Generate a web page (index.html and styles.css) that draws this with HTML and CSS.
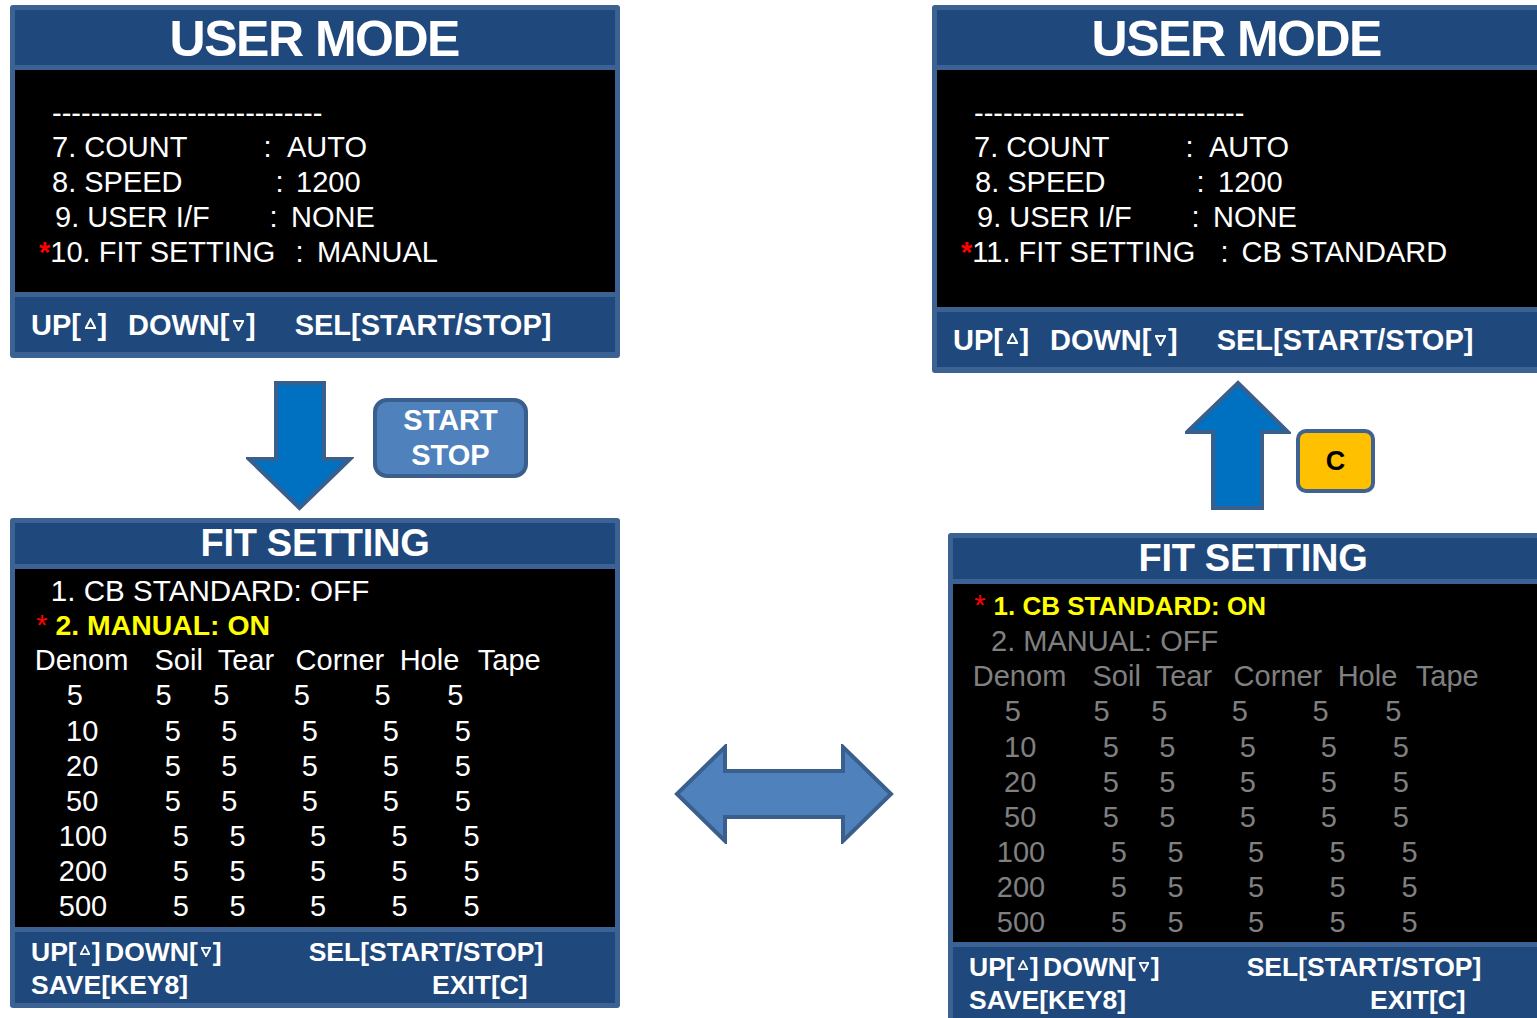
FILE: index.html
```html
<!DOCTYPE html>
<html>
<head>
<meta charset="utf-8">
<title>User Mode / Fit Setting</title>
<link rel="stylesheet" href="styles.css">
</head>
<body>
<div class="stage">

  <div class="col col-left">
    <section class="panel panel-um">
      <div class="hd hd-um">USER MODE</div>
      <div class="scr scr-um">
        <div class="dash">----------------------------</div>
        <div class="mrow r7"><span>7. COUNT</span><span>:</span><span>AUTO</span></div>
        <div class="mrow r8"><span>8. SPEED</span><span>:</span><span>1200</span></div>
        <div class="mrow r9"><span>9. USER I/F</span><span>:</span><span>NONE</span></div>
        <div class="mrow r10"><span><span class="ast">*</span>10. FIT SETTING</span><span>:</span><span>MANUAL</span></div>
      </div>
      <div class="ft ft-um">
        <span class="fi f-up">UP[<svg class="tri tri-up" viewBox="0 0 10 10"><polygon points="5,0.9 9.3,9.1 0.7,9.1"/></svg>]</span>
        <span class="fi f-down">DOWN[<svg class="tri tri-down" viewBox="0 0 10 10"><polygon points="0.7,0.9 9.3,0.9 5,9.1"/></svg>]</span>
        <span class="fi">SEL[START/STOP]</span>
      </div>
    </section>

    <div class="step step-left">
      <svg class="arrow-down" viewBox="0 0 108 132" width="108" height="132">
        <polygon points="30,3 78,3 78,79 104,79 53.5,128 3,79 30,79"/>
      </svg>
      <div class="key key-start">START<br>STOP</div>
    </div>

    <section class="panel panel-fs">
      <div class="hd hd-fs">FIT SETTING</div>
      <div class="scr scr-fs">
        <div class="fl fl1">1. CB STANDARD: OFF</div>
        <div class="fl fl2"><span class="ast2">*</span><span class="sel sel-l">2. MANUAL: ON</span></div>
        <div class="trow hdr"><span>Denom</span><span>Soil</span><span>Tear</span><span>Corner</span><span>Hole</span><span>Tape</span></div>
        <div class="trow g1"><span>5</span><span>5</span><span>5</span><span>5</span><span>5</span><span>5</span></div>
        <div class="trow g2"><span>10</span><span>5</span><span>5</span><span>5</span><span>5</span><span>5</span></div>
        <div class="trow g2"><span>20</span><span>5</span><span>5</span><span>5</span><span>5</span><span>5</span></div>
        <div class="trow g2"><span>50</span><span>5</span><span>5</span><span>5</span><span>5</span><span>5</span></div>
        <div class="trow g3"><span>100</span><span>5</span><span>5</span><span>5</span><span>5</span><span>5</span></div>
        <div class="trow g3"><span>200</span><span>5</span><span>5</span><span>5</span><span>5</span><span>5</span></div>
        <div class="trow g3"><span>500</span><span>5</span><span>5</span><span>5</span><span>5</span><span>5</span></div>
      </div>
      <div class="ft ft-fs">
        <div class="fline fline1">
          <span class="fi fb-up">UP[<svg class="tri tri-up" viewBox="0 0 10 10"><polygon points="5,0.9 9.3,9.1 0.7,9.1"/></svg>]</span>
          <span class="fi fb-down">DOWN[<svg class="tri tri-down" viewBox="0 0 10 10"><polygon points="0.7,0.9 9.3,0.9 5,9.1"/></svg>]</span>
          <span class="fi">SEL[START/STOP]</span>
        </div>
        <div class="fline fline2">
          <span class="fi fb-save">SAVE[KEY8]</span>
          <span class="fi">EXIT[C]</span>
        </div>
      </div>
    </section>
  </div>

  <div class="col col-mid">
    <svg class="arrow-both" viewBox="0 0 220 100" width="220" height="100">
      <polygon points="3,50 51,3 51,27 169,27 169,3 217,50 169,97 169,73 51,73 51,97"/>
    </svg>
  </div>

  <div class="col col-right">
    <section class="panel panel-um panel-um-r">
      <div class="hd hd-um">USER MODE</div>
      <div class="scr scr-um scr-um-r">
        <div class="dash">----------------------------</div>
        <div class="mrow r7"><span>7. COUNT</span><span>:</span><span>AUTO</span></div>
        <div class="mrow r8 r8b"><span>8. SPEED</span><span>:</span><span>1200</span></div>
        <div class="mrow r9"><span>9. USER I/F</span><span>:</span><span>NONE</span></div>
        <div class="mrow r11"><span><span class="ast">*</span>11. FIT SETTING</span><span>:</span><span>CB STANDARD</span></div>
      </div>
      <div class="ft ft-um">
        <span class="fi f-up">UP[<svg class="tri tri-up" viewBox="0 0 10 10"><polygon points="5,0.9 9.3,9.1 0.7,9.1"/></svg>]</span>
        <span class="fi f-down">DOWN[<svg class="tri tri-down" viewBox="0 0 10 10"><polygon points="0.7,0.9 9.3,0.9 5,9.1"/></svg>]</span>
        <span class="fi">SEL[START/STOP]</span>
      </div>
    </section>

    <div class="step step-right">
      <svg class="arrow-up" viewBox="0 0 106 132" width="106" height="132">
        <polygon points="53,3 103,52 77,52 77,128 28,128 28,52 2,52"/>
      </svg>
      <div class="key key-c">C</div>
    </div>

    <section class="panel panel-fs panel-fs-r">
      <div class="hd hd-fs">FIT SETTING</div>
      <div class="scr scr-fs dim">
        <div class="fl fl2"><span class="ast2">*</span><span class="sel sel-r">1. CB STANDARD: ON</span></div>
        <div class="fl fl1 fl1r">2. MANUAL: OFF</div>
        <div class="trow hdr"><span>Denom</span><span>Soil</span><span>Tear</span><span>Corner</span><span>Hole</span><span>Tape</span></div>
        <div class="trow g1"><span>5</span><span>5</span><span>5</span><span>5</span><span>5</span><span>5</span></div>
        <div class="trow g2"><span>10</span><span>5</span><span>5</span><span>5</span><span>5</span><span>5</span></div>
        <div class="trow g2"><span>20</span><span>5</span><span>5</span><span>5</span><span>5</span><span>5</span></div>
        <div class="trow g2"><span>50</span><span>5</span><span>5</span><span>5</span><span>5</span><span>5</span></div>
        <div class="trow g3"><span>100</span><span>5</span><span>5</span><span>5</span><span>5</span><span>5</span></div>
        <div class="trow g3"><span>200</span><span>5</span><span>5</span><span>5</span><span>5</span><span>5</span></div>
        <div class="trow g3"><span>500</span><span>5</span><span>5</span><span>5</span><span>5</span><span>5</span></div>
      </div>
      <div class="ft ft-fs">
        <div class="fline fline1">
          <span class="fi fb-up">UP[<svg class="tri tri-up" viewBox="0 0 10 10"><polygon points="5,0.9 9.3,9.1 0.7,9.1"/></svg>]</span>
          <span class="fi fb-down">DOWN[<svg class="tri tri-down" viewBox="0 0 10 10"><polygon points="0.7,0.9 9.3,0.9 5,9.1"/></svg>]</span>
          <span class="fi">SEL[START/STOP]</span>
        </div>
        <div class="fline fline2">
          <span class="fi fb-save">SAVE[KEY8]</span>
          <span class="fi">EXIT[C]</span>
        </div>
      </div>
    </section>
  </div>

</div>
</body>
</html>
```

FILE: styles.css
```css
html, body {
  margin: 0;
  padding: 0;
  overflow: hidden;
  background: #ffffff;
}
body {
  width: 1537px;
  height: 1018px;
  font-family: "Liberation Sans", Arial, sans-serif;
  color: #ffffff;
}
.stage {
  display: flex;
  align-items: flex-start;
}
.col {
  flex-shrink: 0;
  display: flex;
  flex-direction: column;
  align-items: flex-start;
}
.col-left {
  margin-left: 10px;
  margin-top: 5px;
  width: 610px;
}
.col-mid {
  margin-left: 54px;
  margin-top: 744px;
  width: 220px;
}
.col-right {
  margin-left: 38px;
  margin-top: 5px;
  width: 626px;
}

/* ---------- panels ---------- */
.panel {
  box-sizing: border-box;
  width: 610px;
  flex-shrink: 0;
  background: #3b6292;
  padding: 5px 5px 6px;
  display: flex;
  flex-direction: column;
  gap: 5px;
  border-radius: 3px;
}
.panel-fs {
  padding-bottom: 5px;
}
.panel-fs-r {
  margin-left: 16px;
}
.hd {
  background: #1f487c;
  font-weight: bold;
  text-align: center;
  color: #ffffff;
}
.hd-um {
  height: 55px;
  box-sizing: border-box;
  padding-top: 2px;
  font-size: 50px;
  line-height: 55px;
  letter-spacing: -1.5px;
  text-indent: -1.5px;
}
.hd-fs {
  height: 41px;
  font-size: 38px;
  line-height: 41px;
  letter-spacing: -0.3px;
}
.scr {
  background: #000000;
  color: #ffffff;
  font-size: 29px;
  white-space: nowrap;
}
.scr-um {
  height: 222px;
  box-sizing: border-box;
  padding-top: 26.4px;
}
.scr-um-r {
  height: 237px;
}
.scr-fs {
  height: 358px;
  box-sizing: border-box;
  padding-top: 4px;
  line-height: 35.15px;
}
.ft {
  background: #1f487c;
  color: #ffffff;
  font-weight: bold;
  white-space: nowrap;
}
.ft-um {
  height: 55px;
  box-sizing: border-box;
  padding-top: 2px;
  padding-left: 16px;
  font-size: 29px;
  line-height: 53px;
  display: flex;
}
.ft-fs {
  height: 71px;
  box-sizing: border-box;
  padding-top: 3.5px;
  font-size: 26.5px;
  line-height: 33px;
}

/* ---------- user mode screen ---------- */
.dash {
  line-height: 35px;
  margin-bottom: -1.8px;
  padding-left: 37px;
}
.mrow {
  display: grid;
  line-height: 35.3px;
}
.r7 { padding-left: 37px; grid-template-columns: 211.5px 23.5px auto; }
.r8 { padding-left: 37px; grid-template-columns: 223.5px 20.5px auto; }
.r8b { padding-left: 38px; grid-template-columns: 221.5px 21.5px auto; }
.r9 { padding-left: 40px; grid-template-columns: 214.5px 21.5px auto; }
.r10 { padding-left: 24px; grid-template-columns: 256.5px 21.5px auto; }
.r11 { padding-left: 24px; grid-template-columns: 259.5px 21px auto; }
.ast {
  color: #ff0000;
  font-weight: bold;
}

/* ---------- footer items ---------- */
.fi { display: inline-block; }
.f-up { width: 97px; }
.f-down { width: 166.7px; }
.fline {
  display: flex;
  padding-left: 16px;
}
.fb-up { width: 74px; }
.fb-down { width: 203.7px; }
.fb-save { width: 401px; }
.tri {
  width: 0.38em;
  height: 0.38em;
  margin: 0 0.06em 0 0.13em;
  fill: none;
  stroke: #ffffff;
  stroke-width: 1.8;
  stroke-linejoin: miter;
}
.tri-up { vertical-align: 0.22em; }
.tri-down { vertical-align: 0.13em; }

/* ---------- fit setting screen ---------- */
.fl1 { padding-left: 35.8px; font-size: 29.6px; }
.fl1r { padding-left: 38px; font-size: 29px; }
.fl2 { padding-left: 21.2px; }
.ast2 {
  color: #ff0000;
  margin-right: 8px;
}
.sel {
  color: #ffff00;
  font-weight: bold;
}
.sel-l { font-size: 28.4px; }
.sel-r { font-size: 26px; }
.trow { display: grid; }
.hdr { padding-left: 19.8px; grid-template-columns: 119.7px 63.2px 77.9px 104.1px 78.2px auto; }
.g1 { padding-left: 51.8px; grid-template-columns: 88.8px 57.7px 80.5px 80.8px 72.7px auto; }
.g2 { padding-left: 51px; grid-template-columns: 98.7px 56.6px 80.5px 81px 72px auto; }
.g3 { padding-left: 43.8px; grid-template-columns: 114px 56.6px 80.7px 81.5px 71.8px auto; }
.dim .fl1,
.dim .trow { color: #808080; }

/* ---------- steps, arrows, keys ---------- */
.step {
  display: flex;
  align-items: flex-start;
  flex-shrink: 0;
}
.step-left { height: 160px; }
.step-right { height: 160px; }
.arrow-down {
  margin-left: 236px;
  margin-top: 22px;
}
.arrow-up {
  margin-left: 253px;
  margin-top: 7px;
}
.arrow-down polygon,
.arrow-up polygon {
  fill: #0070c0;
  stroke: #3a5f8c;
  stroke-width: 4;
  stroke-linejoin: miter;
}
.arrow-both polygon {
  fill: #4f81bd;
  stroke: #3a5f8c;
  stroke-width: 4;
  stroke-linejoin: miter;
}
.arrow-both { display: block; }
.key {
  box-sizing: border-box;
  font-weight: bold;
  display: flex;
  align-items: center;
  justify-content: center;
  text-align: center;
}
.key-start {
  margin-left: 19px;
  margin-top: 40px;
  width: 155px;
  height: 80px;
  background: #4f81bd;
  border: 4px solid #3a5f8c;
  border-radius: 14px;
  color: #ffffff;
  font-size: 29px;
  line-height: 35px;
}
.key-c {
  margin-left: 5px;
  margin-top: 56px;
  width: 79px;
  height: 64px;
  background: #ffc000;
  border: 4px solid #3f6291;
  border-radius: 10px;
  color: #000000;
  font-size: 27px;
}
```
